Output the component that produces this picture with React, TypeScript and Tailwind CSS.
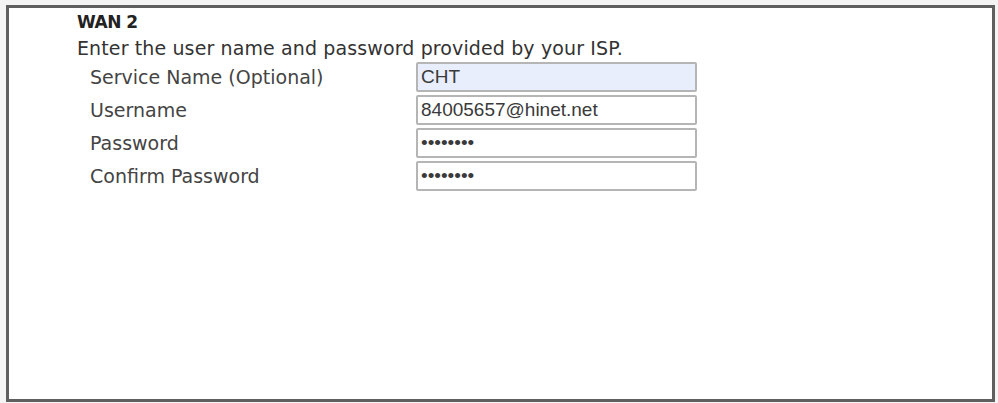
import React from "react";

const rows = [
  { label: "Service Name (Optional)", value: "CHT", type: "text", filled: true },
  { label: "Username", value: "84005657@hinet.net", type: "text", filled: false },
  { label: "Password", value: "abcdefgh", type: "password", filled: false },
  { label: "Confirm Password", value: "abcdefgh", type: "password", filled: false },
];

export default function App() {
  return (
    <div className="h-[403px] w-[998px] bg-[#f4f4f4] pl-[6px] pt-[5px] font-['DejaVu_Sans',sans-serif]">
      <div className="h-[397px] w-[989px] border-[3px] border-[#5f5f5f] bg-white pl-[68px] pt-[4px]">
        <p className="text-[17px] font-bold leading-5 tracking-[-0.5px] text-[#222]">WAN 2</p>
        <p className="mt-[5px] text-[19px] leading-[22px] tracking-[0.12px] text-[#333]">
          Enter the user name and password provided by your ISP.
        </p>
        <div className="mt-[3px] flex flex-col gap-[3px] pl-[13px]">
          {rows.map((row) => (
            <div key={row.label} className="flex items-center">
              <span className="w-[326px] text-[19px] text-[#444]">{row.label}</span>
              <input
                type={row.type}
                defaultValue={row.value}
                readOnly
                className={`h-[30px] w-[281px] rounded-[2px] border-2 border-[#b5b5b5] px-[3px] font-['Liberation_Sans',sans-serif] text-[19px] text-[#3a3a3a] outline-none ${
                  row.filled ? "bg-[#e8eefb]" : "bg-white"
                }`}
              />
            </div>
          ))}
        </div>
      </div>
    </div>
  );
}
